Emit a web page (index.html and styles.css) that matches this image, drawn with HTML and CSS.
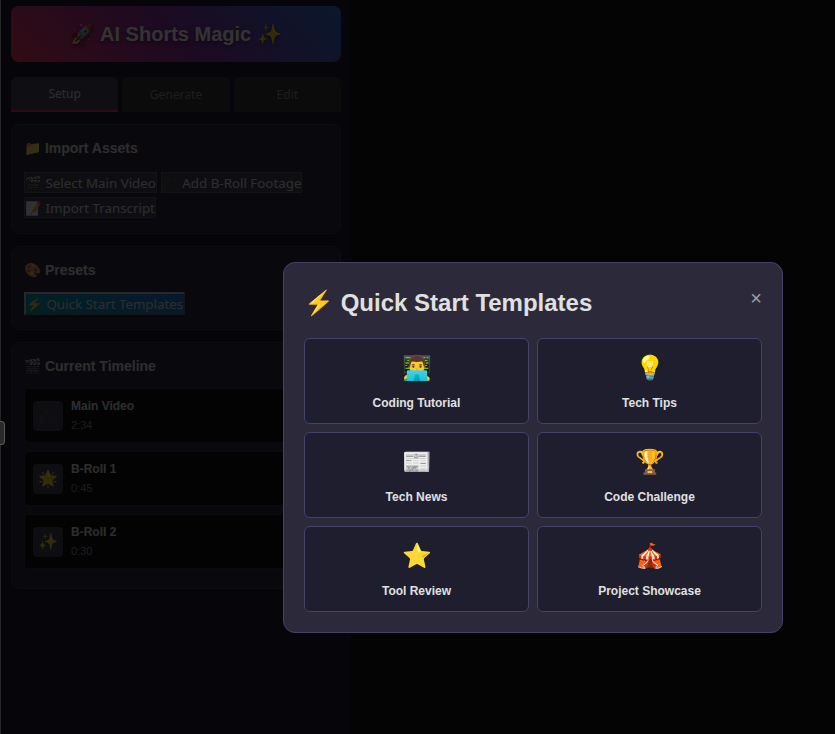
FILE: index.html
```html
<!DOCTYPE html>
<html lang="en">
<head>
<meta charset="utf-8">
<meta name="viewport" content="width=device-width, initial-scale=1">
<title>AI Shorts Magic</title>
<link rel="stylesheet" href="styles.css">
</head>
<body>
<div class="app">
  <aside class="sidebar">
    <h1 class="brand">🚀 AI Shorts Magic ✨</h1>
    <nav class="tabs">
      <button class="tab tab-active" type="button">Setup</button>
      <button class="tab" type="button">Generate</button>
      <button class="tab" type="button">Edit</button>
    </nav>
    <section class="card">
      <h3 class="card-title">📁 Import Assets</h3>
      <div class="actions">
        <button class="btn" type="button">🎬 Select Main Video</button>
        <button class="btn" type="button"><span class="dim">🎥</span> Add B-Roll Footage</button>
        <button class="btn" type="button">📝 Import Transcript</button>
      </div>
    </section>
    <section class="card">
      <h3 class="card-title">🎨 Presets</h3>
      <div class="actions">
        <button class="btn btn-accent" type="button">⚡ Quick Start Templates</button>
      </div>
    </section>
    <section class="card">
      <h3 class="card-title">🎬 Current Timeline</h3>
      <ul class="timeline">
        <li class="clip"><span class="thumb"><span class="dim">🎥</span></span><div><div class="clip-name">Main Video</div><div class="clip-time">2:34</div></div></li>
        <li class="clip"><span class="thumb">🌟</span><div><div class="clip-name">B-Roll 1</div><div class="clip-time">0:45</div></div></li>
        <li class="clip"><span class="thumb">✨</span><div><div class="clip-name">B-Roll 2</div><div class="clip-time">0:30</div></div></li>
      </ul>
    </section>
  </aside>
  <main class="stage"></main>
</div>
<div class="overlay">
  <div class="modal" role="dialog" aria-labelledby="modal-title">
    <header class="modal-head">
      <h2 class="modal-title" id="modal-title">⚡ Quick Start Templates</h2>
      <button class="close" type="button" aria-label="Close">×</button>
    </header>
    <div class="templates">
      <button class="template" type="button"><span class="template-icon">👨‍💻</span><span class="template-name">Coding Tutorial</span></button>
      <button class="template" type="button"><span class="template-icon">💡</span><span class="template-name">Tech Tips</span></button>
      <button class="template" type="button"><span class="template-icon">📰</span><span class="template-name">Tech News</span></button>
      <button class="template" type="button"><span class="template-icon">🏆</span><span class="template-name">Code Challenge</span></button>
      <button class="template" type="button"><span class="template-icon">⭐</span><span class="template-name">Tool Review</span></button>
      <button class="template" type="button"><span class="template-icon">🎪</span><span class="template-name">Project Showcase</span></button>
    </div>
  </div>
</div>
<div class="handle"></div>
</body>
</html>
```
FILE: styles.css
```css
* { box-sizing: border-box; }
body {
  margin: 0;
  background: #18181c;
  color: #e0e0e0;
  font-family: "Liberation Sans", Arial, sans-serif;
  font-size: 12px;
}
h1, h2, h3, ul { margin: 0; padding: 0; }
button { margin: 0; cursor: pointer; }

.app { display: flex; min-height: 100vh; border-left: 1px solid #c0c0c0; }
.sidebar { flex: 0 0 350px; padding: 6px 10px; background: #222232; }
.stage { flex: 1; }

.brand {
  padding: 12px;
  border-radius: 8px;
  background: linear-gradient(45deg, #fa3c64, #8c32aa, #3278dc);
  color: #fff;
  font-size: 20px;
  line-height: 32px;
  text-align: center;
  text-shadow: 0 2px 4px rgba(0, 0, 0, 0.5);
}

.tabs { display: flex; gap: 4px; margin: 15px 0 12px; }
.tab {
  flex: 1;
  height: 35px;
  padding: 0;
  border: 0;
  border-radius: 6px 6px 0 0;
  background: #38383c;
  color: #909090;
  font: 12px "Noto Sans", sans-serif;
}
.tab-active { border-bottom: 2px solid #e63264; background: #4b4b60; color: #e0e0e0; }

.card {
  margin-bottom: 12px;
  padding: 12px 12px 13px;
  border: 1px solid #404050;
  border-radius: 8px;
  background: #303040;
}
.card-title { margin-bottom: 11px; font-size: 14px; line-height: 22px; }

.actions { display: flex; flex-wrap: wrap; column-gap: 4px; }
.btn {
  height: 21px;
  margin: 2px 0;
  padding: 1px 0 0;
  border: 1px solid #606070;
  background: #48485c;
  color: #e0e0e0;
  font-family: "Noto Sans", sans-serif;
  line-height: 18px;
}
.dim { opacity: 0.7; }
.actions .btn-accent {
  height: 23px;
  margin: 0 0 1px;
  border: 2px outset #c0c0c0;
  background: linear-gradient(45deg, #00a0b4, #2878dc);
}

.timeline { display: flex; flex-direction: column; gap: 8px; padding-bottom: 6px; list-style: none; }
.clip {
  display: flex;
  align-items: center;
  gap: 8px;
  padding: 8px;
  border: 1px solid #3a3a48;
  border-radius: 4px;
  background: #121218;
}
.thumb {
  width: 30px;
  height: 30px;
  border-radius: 4px;
  background: #46465a;
  font-size: 16px;
  line-height: 30px;
  text-align: center;
}
.clip-name { font-weight: bold; line-height: 19px; }
.clip-time { color: #909090; font-size: 11px; line-height: 18px; }

.overlay {
  position: fixed;
  inset: 0;
  display: flex;
  align-items: flex-end;
  justify-content: flex-end;
  padding: 0 52px 101px 0;
  background: rgba(0, 0, 0, 0.8);
}
.modal {
  width: 100%;
  max-width: 500px;
  padding: 20px;
  border: 1px solid #44426a;
  border-radius: 12px;
  background: #2c2a3a;
}
.modal-head { display: flex; justify-content: space-between; align-items: flex-start; margin-bottom: 16px; }
.modal-title { font-size: 24px; line-height: 39px; }
.close {
  padding: 0;
  border: 0;
  background: none;
  color: #a0a0a0;
  font: 20px/30px "Liberation Sans", Arial, sans-serif;
}
.templates { display: grid; grid-template-columns: 1fr 1fr; gap: 8px; }
.template {
  display: flex;
  flex-direction: column;
  align-items: center;
  gap: 10px;
  padding: 12px;
  border: 1px solid #44426a;
  border-radius: 6px;
  background: #1e1e2e;
  color: #e0e0e0;
  font: bold 12px/16px "Liberation Sans", Arial, sans-serif;
}
.template-icon { font-size: 24px; line-height: 34px; }

.handle {
  position: fixed;
  top: 421px;
  left: 0;
  width: 5px;
  height: 24px;
  border: 1px solid #5a5a58;
  border-left: 0;
  border-radius: 0 4px 4px 0;
  background: #2a2a28;
}
```
